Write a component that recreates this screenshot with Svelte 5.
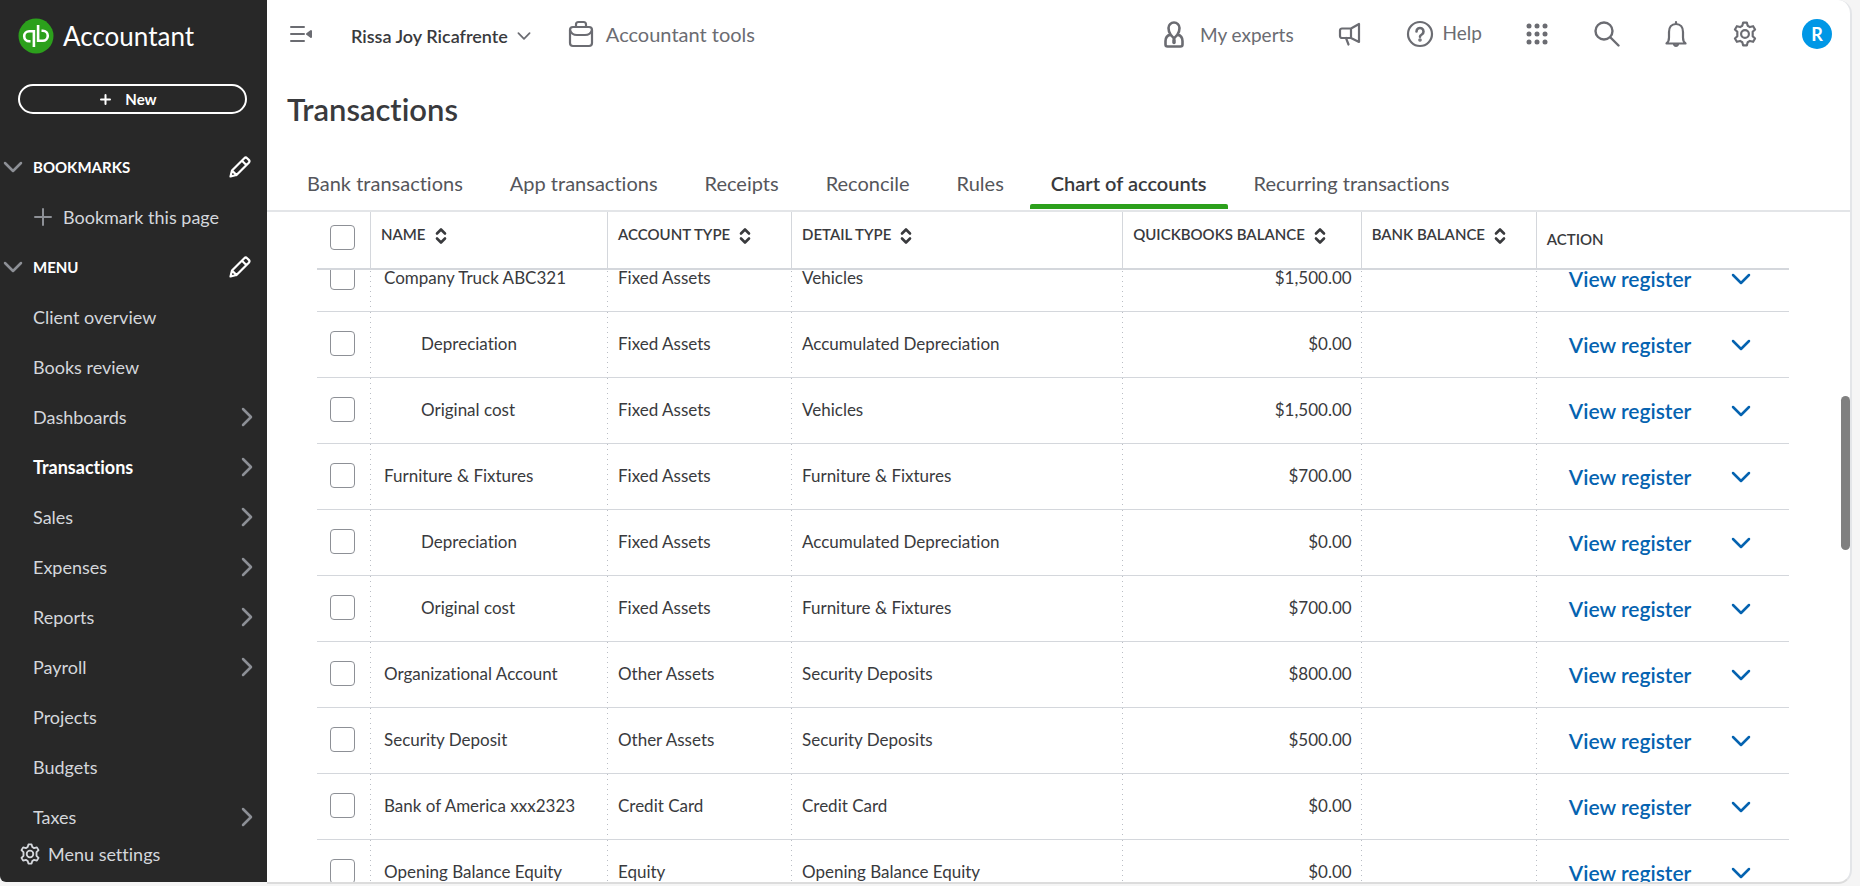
<script lang="ts">
  import { onMount } from "svelte";

  interface NavItem {
    label: string;
    expandable?: boolean;
  }

  interface Account {
    name: string;
    sub?: boolean;
    type: string;
    detail: string;
    balance: string;
  }

  const navItems: NavItem[] = [
    { label: "Client overview" },
    { label: "Books review" },
    { label: "Dashboards", expandable: true },
    { label: "Transactions", expandable: true },
    { label: "Sales", expandable: true },
    { label: "Expenses", expandable: true },
    { label: "Reports", expandable: true },
    { label: "Payroll", expandable: true },
    { label: "Projects" },
    { label: "Budgets" },
    { label: "Taxes", expandable: true },
  ];

  const tabs = [
    "Bank transactions",
    "App transactions",
    "Receipts",
    "Reconcile",
    "Rules",
    "Chart of accounts",
    "Recurring transactions",
  ];

  const columns = ["Name", "Account type", "Detail type", "QuickBooks balance", "Bank balance"];

  const accounts: Account[] = [
    { name: "Company Truck ABC321", type: "Fixed Assets", detail: "Vehicles", balance: "$1,500.00" },
    { name: "Depreciation", sub: true, type: "Fixed Assets", detail: "Accumulated Depreciation", balance: "$0.00" },
    { name: "Original cost", sub: true, type: "Fixed Assets", detail: "Vehicles", balance: "$1,500.00" },
    { name: "Furniture & Fixtures", type: "Fixed Assets", detail: "Furniture & Fixtures", balance: "$700.00" },
    { name: "Depreciation", sub: true, type: "Fixed Assets", detail: "Accumulated Depreciation", balance: "$0.00" },
    { name: "Original cost", sub: true, type: "Fixed Assets", detail: "Furniture & Fixtures", balance: "$700.00" },
    { name: "Organizational Account", type: "Other Assets", detail: "Security Deposits", balance: "$800.00" },
    { name: "Security Deposit", type: "Other Assets", detail: "Security Deposits", balance: "$500.00" },
    { name: "Bank of America xxx2323", type: "Credit Card", detail: "Credit Card", balance: "$0.00" },
    { name: "Opening Balance Equity", type: "Equity", detail: "Opening Balance Equity", balance: "$0.00" },
  ];

  let activeNav = $state("Transactions");
  let activeTab = $state("Chart of accounts");
  let selected = $state(accounts.map(() => false));
  let tableWrap: HTMLDivElement;
  const allSelected = $derived(selected.every(Boolean));

  function toggleAll() {
    const next = !allSelected;
    selected = accounts.map(() => next);
  }

  // the list opens part-way through a row, under the sticky header
  onMount(() => {
    tableWrap.scrollTop = 24;
  });
</script>

{#snippet gear(size: number)}
  <svg class="icon" width={size} height={size} viewBox="0 0 24 24" stroke-width="2" aria-hidden="true">
    <path d="M10.300 1.500h3.400l.8 2.900 2 1.200 3-.8 1.800 3-2.200 2.200v4l2.200 2.200-1.800 3-3-.8-2 1.200-.8 2.900h-3.400l-.8-2.900-2-1.200-3 .8-1.800-3L4.900 14v-4L2.700 7.800l1.800-3 3 .8 2-1.200z" />
    <circle cx="12" cy="12" r="3.600" />
  </svg>
{/snippet}

{#snippet chevron(direction: "down" | "right", size: number)}
  <svg class="icon" width={size} height={size} viewBox="0 0 20 20" stroke-width="2.500" aria-hidden="true">
    <path d={direction === "down" ? "M2 6l8 8 8-8" : "M6 2l8 8-8 8"} />
  </svg>
{/snippet}

{#snippet pencil()}
  <svg class="icon" width="22" height="22" viewBox="0 0 22 22" stroke-width="2.200" aria-hidden="true">
    <path d="M1.500 20.500l1.500-6L15.300 2.200a2 2 0 0 1 2.800 0l1.700 1.700a2 2 0 0 1 0 2.800L7.500 19zM13 4.700l4.300 4.300M3 14.500L7.500 19" />
  </svg>
{/snippet}

{#snippet sorter()}
  <svg class="icon" width="12" height="18" viewBox="0 0 12 18" stroke-width="2.600" aria-hidden="true">
    <path d="M2 6.500l4-4 4 4M2 11.500l4 4 4-4" />
  </svg>
{/snippet}

<div class="app">
  <aside class="sidebar">
    <div class="brand">
      <svg width="36" height="36" viewBox="0 0 36 36" aria-hidden="true">
        <circle cx="18" cy="18" r="17.500" fill="#2ca01c" />
        <g fill="none" stroke="#fff" stroke-width="2.600">
          <path d="M12.500 23.200h-1.300a5 5 0 0 1 0-10h4.700V29" />
          <path d="M23.500 12.800h1.300a5 5 0 0 1 0 10h-4.700V7" />
        </g>
      </svg>
      <span>Accountant</span>
    </div>

    <button type="button" class="new">
      <svg class="icon" width="11" height="11" viewBox="0 0 11 11" stroke-width="2" aria-hidden="true">
        <path d="M5.500 1v9M1 5.500h9" />
      </svg>
      New
    </button>

    <nav aria-label="Main">
      <div class="section">
        <button type="button" class="section-toggle">{@render chevron("down", 20)}Bookmarks</button>
        <button type="button" class="edit" aria-label="Edit bookmarks">{@render pencil()}</button>
      </div>
      <button type="button" class="bookmark">
        <svg class="icon" width="18" height="18" viewBox="0 0 18 18" stroke-width="2" aria-hidden="true">
          <path d="M9 1v16M1 9h16" />
        </svg>
        Bookmark this page
      </button>
      <div class="section">
        <button type="button" class="section-toggle">{@render chevron("down", 20)}Menu</button>
        <button type="button" class="edit" aria-label="Edit menu">{@render pencil()}</button>
      </div>
      <ul>
        {#each navItems as item (item.label)}
          <li>
            <a
              href={`#${item.label}`}
              class="nav-link"
              class:active={item.label === activeNav}
              onclick={() => (activeNav = item.label)}
            >
              <span>{item.label}</span>
              {#if item.expandable}{@render chevron("right", 20)}{/if}
            </a>
          </li>
        {/each}
      </ul>
    </nav>

    <button type="button" class="menu-settings">{@render gear(22)}Menu settings</button>
  </aside>

  <main class="page">
    <header class="topbar">
      <button type="button" aria-label="Collapse menu">
        <svg width="24" height="18" viewBox="0 0 24 18" aria-hidden="true">
          <path d="M2 2h13M2 9h13M2 16h13" stroke="currentColor" stroke-width="2" stroke-linecap="round" />
          <path d="M22 6v6l-4-3z" fill="currentColor" stroke="currentColor" stroke-width="2" stroke-linejoin="round" />
        </svg>
      </button>
      <button type="button" class="company">Rissa Joy Ricafrente {@render chevron("down", 14)}</button>
      <button type="button" class="labelled tools">
        <svg class="icon" width="26" height="28" viewBox="0 0 26 28" stroke-width="2.200" aria-hidden="true">
          <rect x="2" y="7" width="22" height="19" rx="3" />
          <path d="M8 7V4.500A2.500 2.500 0 0 1 10.500 2h5A2.500 2.500 0 0 1 18 4.500V7M2 10c1 3.500 4 5 7 5h8c3 0 6-1.500 7-5" />
        </svg>
        Accountant tools
      </button>

      <div class="actions">
        <button type="button" class="labelled experts">
          <svg class="icon" width="20" height="27" viewBox="0 0 20 27" stroke-width="2.600" aria-hidden="true">
            <path d="M6.500 13.500C5.200 11.500 4.500 9 4.500 7a5.500 5.500 0 0 1 11 0c0 2-.7 4.500-2 6.500M6.500 13.500L10 17.500l3.500-4M6.500 13.500C3 14.500 1.500 17 1.500 20v3.500a2 2 0 0 0 2 2h13a2 2 0 0 0 2-2V20c0-3-1.500-5.500-5-6.500" />
            <path d="M10 19v2.500" stroke-width="3.500" />
          </svg>
          My experts
        </button>
        <button type="button" aria-label="What's new">
          <svg class="icon" width="24" height="24" viewBox="0 0 24 24" stroke-width="2.200" aria-hidden="true">
            <path d="M21 2v18l-8-4H4a2 2 0 0 1-2-2V8.500a2 2 0 0 1 2-2h9zM13 6.500V16M8 16l2.500 6.500" />
          </svg>
        </button>
        <button type="button" class="labelled help">
          <svg class="icon" width="28" height="28" viewBox="0 0 28 28" stroke-width="2.200" aria-hidden="true">
            <circle cx="14" cy="14" r="12" />
            <path d="M10.500 11.500a3.500 3.500 0 1 1 5.300 3c-1.200.7-1.800 1.100-1.800 2.200" stroke-width="2.600" />
            <circle cx="14" cy="20" r=".7" />
          </svg>
          <span>Help</span>
        </button>
        <button type="button" aria-label="Apps">
          <svg width="24" height="24" viewBox="0 0 24 24" fill="currentColor" aria-hidden="true">
            {#each [4, 12, 20] as cy}
              {#each [4, 12, 20] as cx}
                <circle cx={cx - 1} {cy} r="2.500" />
              {/each}
            {/each}
          </svg>
        </button>
        <button type="button" aria-label="Search">
          <svg class="icon" width="26" height="26" viewBox="0 0 26 26" stroke-width="2.400" aria-hidden="true">
            <circle cx="10" cy="10" r="8.500" />
            <path d="M16.500 16.500l8 8" />
          </svg>
        </button>
        <button type="button" aria-label="Notifications">
          <svg class="icon" width="24" height="28" viewBox="0 0 24 28" stroke-width="2.200" aria-hidden="true">
            <path d="M2.500 23.500c2-1.500 2.500-3 2.500-6V12c0-4.500 2.500-8 7-8s7 3.500 7 8v5.500c0 3 .5 4.500 2.500 6zM12 2v2M10 24.500a2.200 2.200 0 0 0 4 0" />
          </svg>
        </button>
        <button type="button" aria-label="Settings">{@render gear(26)}</button>
        <button type="button" class="avatar" aria-label="Profile">R</button>
      </div>
    </header>

    <h1>Transactions</h1>

    <div class="tabs" role="tablist" aria-label="Transactions">
      {#each tabs as tab (tab)}
        <button
          type="button"
          role="tab"
          class="tab"
          class:active={tab === activeTab}
          aria-selected={tab === activeTab}
          onclick={() => (activeTab = tab)}
        >
          {tab}
        </button>
      {/each}
    </div>

    <div class="table-wrap" bind:this={tableWrap}>
      <table>
        <colgroup>
          <col class="col-check" />
          <col class="col-name" />
          <col class="col-type" />
          <col class="col-detail" />
          <col class="col-balance" />
          <col class="col-bank" />
          <col class="col-action" />
        </colgroup>
        <thead>
          <tr>
            <th class="check">
              <input type="checkbox" aria-label="Select all accounts" checked={allSelected} onchange={toggleAll} />
            </th>
            {#each columns as column (column)}
              <th scope="col">
                <button type="button" class="sort">{column}{@render sorter()}</button>
              </th>
            {/each}
            <th scope="col" class="action-head">Action</th>
          </tr>
        </thead>
        <tbody>
          {#each accounts as account, index}
            <tr>
              <td class="check">
                <input type="checkbox" aria-label={`Select ${account.name}`} bind:checked={selected[index]} />
              </td>
              <td class="name" class:sub={account.sub}>{account.name}</td>
              <td>{account.type}</td>
              <td>{account.detail}</td>
              <td class="amount">{account.balance}</td>
              <td></td>
              <td>
                <div class="row-actions">
                  <a href="#register">View register</a>
                  <button type="button" aria-label="More actions">{@render chevron("down", 20)}</button>
                </div>
              </td>
            </tr>
          {/each}
        </tbody>
      </table>
    </div>
    <div class="scroll-thumb"></div>
  </main>
</div>

<style>
  :global(body) {
    background: #f5f5f5;
  }

  .app {
    display: flex;
    height: 100vh;
    padding: 0 8px 2px 0;
    box-sizing: border-box;
    overflow: hidden;
    font-family: Lato, "Liberation Sans", sans-serif;
    font-variant-ligatures: none;
    color: #393a3d;
  }

  button {
    display: flex;
    align-items: center;
    padding: 0;
    border: none;
    background: none;
    font: inherit;
    font-variant-ligatures: none;
    color: inherit;
    cursor: pointer;
  }

  .icon {
    flex: none;
    fill: none;
    stroke: currentColor;
    stroke-linecap: round;
    stroke-linejoin: round;
  }

  /* sidebar */
  .sidebar {
    display: flex;
    flex-direction: column;
    flex: none;
    width: 267px;
    margin-bottom: 2px;
    box-sizing: border-box;
    background: #282828;
    color: #d4d7dc;
    font-size: 18px;
    border-bottom-left-radius: 6px;
  }

  .brand {
    display: flex;
    align-items: center;
    gap: 9px;
    padding: 18px 18px 0;
    font-size: 26px;
    line-height: 36px;
    color: #fff;
  }

  .new {
    justify-content: center;
    gap: 14px;
    height: 30px;
    margin: 30px 20px 28px 18px;
    padding-right: 8px;
    border: 2px solid #fff;
    border-radius: 15px;
    font-size: 15px;
    font-weight: 700;
    color: #fff;
  }

  .section {
    display: flex;
    align-items: center;
    justify-content: space-between;
    height: 50px;
    padding: 0 16px 0 3px;
  }

  .section-toggle {
    gap: 10px;
    font-size: 15px;
    font-weight: 700;
    text-transform: uppercase;
    color: #fff;
  }

  .section-toggle .icon,
  .bookmark .icon,
  .nav-link .icon {
    color: #8d9096;
  }

  .edit {
    color: #fff;
  }

  .bookmark {
    gap: 11px;
    height: 50px;
    padding-left: 34px;
  }

  ul {
    margin: 0;
    padding: 0;
    list-style: none;
  }

  .nav-link {
    display: flex;
    align-items: center;
    justify-content: space-between;
    height: 50px;
    padding: 0 10px 0 33px;
    color: inherit;
    text-decoration: none;
  }

  .nav-link.active {
    font-weight: 700;
    color: #fff;
  }

  .menu-settings {
    gap: 7px;
    height: 24px;
    padding-left: 19px;
  }

  /* page */
  .page {
    position: relative;
    display: flex;
    flex-direction: column;
    flex: 1;
    min-width: 0;
    background: #fff;
    border-right: 2px solid #e3e5e8;
    border-bottom: 2px solid #dcdcdc;
    border-radius: 0 14px 14px 0;
    overflow: hidden;
  }

  .topbar {
    display: flex;
    align-items: center;
    flex: none;
    height: 68px;
    padding: 0 18px 0 22px;
    font-size: 19px;
    color: #6b6c72;
  }

  .company {
    gap: 9px;
    margin: 4px 0 0 38px;
    font-size: 18px;
    font-weight: 600;
    color: #393a3d;
  }

  .company .icon {
    color: #6b6c72;
  }

  .labelled {
    gap: 12px;
  }

  .tools {
    margin-left: 37px;
    font-size: 20px;
  }

  .actions {
    display: flex;
    align-items: center;
    gap: 44px;
    margin-left: auto;
  }

  .experts {
    gap: 16px;
  }

  .help {
    gap: 9px;
  }

  .help span {
    padding-bottom: 4px;
  }

  .avatar {
    justify-content: center;
    width: 30px;
    height: 30px;
    border-radius: 50%;
    background: #0097e6;
    font-size: 18px;
    font-weight: 700;
    color: #fff;
  }

  h1 {
    margin: 22px 0 0 20px;
    font-size: 31px;
    line-height: 38px;
    font-weight: 600;
  }

  .tabs {
    display: flex;
    flex: none;
    gap: 5px;
    height: 82px;
    padding-left: 19px;
    border-bottom: 2px solid #e3e5e8;
  }

  .tab {
    position: relative;
    height: 82px;
    padding: 28px 21px 0;
    box-sizing: border-box;
    font-size: 20px;
    color: #55565b;
    white-space: nowrap;
  }

  .tab.active {
    font-weight: 600;
    color: #393a3d;
  }

  .tab.active::after {
    content: "";
    position: absolute;
    inset: auto 0 1px;
    height: 5px;
    border-radius: 2px 2px 0 0;
    background: #2ca01c;
  }

  /* accounts table */
  .table-wrap {
    flex: 1;
    min-height: 0;
    padding: 0 61px 0 50px;
    overflow-y: auto;
    scrollbar-width: none;
  }

  table {
    width: 100%;
    table-layout: fixed;
    border-collapse: separate;
    border-spacing: 0;
    font-size: 17px;
  }

  .col-check {
    width: 54px;
  }

  .col-name {
    width: 16.1%;
  }

  .col-type {
    width: 12.5%;
  }

  .col-detail {
    width: 22.5%;
  }

  .col-balance {
    width: 16.2%;
  }

  .col-bank {
    width: 11.9%;
  }

  th,
  td {
    box-sizing: border-box;
    padding: 0 10px 2px;
    text-align: left;
  }

  th {
    position: sticky;
    top: 0;
    z-index: 1;
    height: 58px;
    padding-bottom: 10px;
    border-bottom: 2px solid #d4d7dc;
    border-right: 1px solid #d4d7dc;
    background: #fff;
    font-size: 15px;
    font-weight: 600;
    text-transform: uppercase;
  }

  /* dotted column rule, one dot every 5px */
  td {
    height: 66px;
    border-bottom: 1px solid #d4d7dc;
    background: repeating-linear-gradient(#babec5 0 1px, transparent 1px 5px) right / 1px 100% no-repeat;
  }

  th:last-child {
    border-right: none;
  }

  td:last-child {
    background: none;
  }

  .check {
    padding: 0 13px 3px;
  }

  th.check {
    padding-bottom: 6px;
  }

  th.action-head {
    padding-bottom: 2px;
  }

  .name {
    padding-left: 13px;
  }

  .name.sub {
    padding-left: 50px;
  }

  .amount {
    text-align: right;
  }

  .sort {
    align-items: flex-start;
    gap: 9px;
    line-height: 18px;
    text-transform: inherit;
    white-space: nowrap;
  }

  .sort .icon {
    margin-top: 2px;
  }

  input[type="checkbox"] {
    display: block;
    appearance: none;
    width: 25px;
    height: 25px;
    margin: 0;
    border: 1px solid #8d9096;
    border-radius: 4px;
    background: #fff;
  }

  input[type="checkbox"]:checked {
    background: #2ca01c;
  }

  .row-actions {
    display: flex;
    align-items: center;
    gap: 40px;
    padding: 2px 0 0 22px;
    font-size: 21px;
    font-weight: 600;
    color: #0563b0;
    white-space: nowrap;
  }

  .row-actions a {
    color: inherit;
    text-decoration: none;
  }

  /* overlay scrollbar */
  .scroll-thumb {
    position: absolute;
    top: 396px;
    right: 0;
    width: 9px;
    height: 154px;
    border-radius: 5px;
    background: #808080;
  }
</style>
